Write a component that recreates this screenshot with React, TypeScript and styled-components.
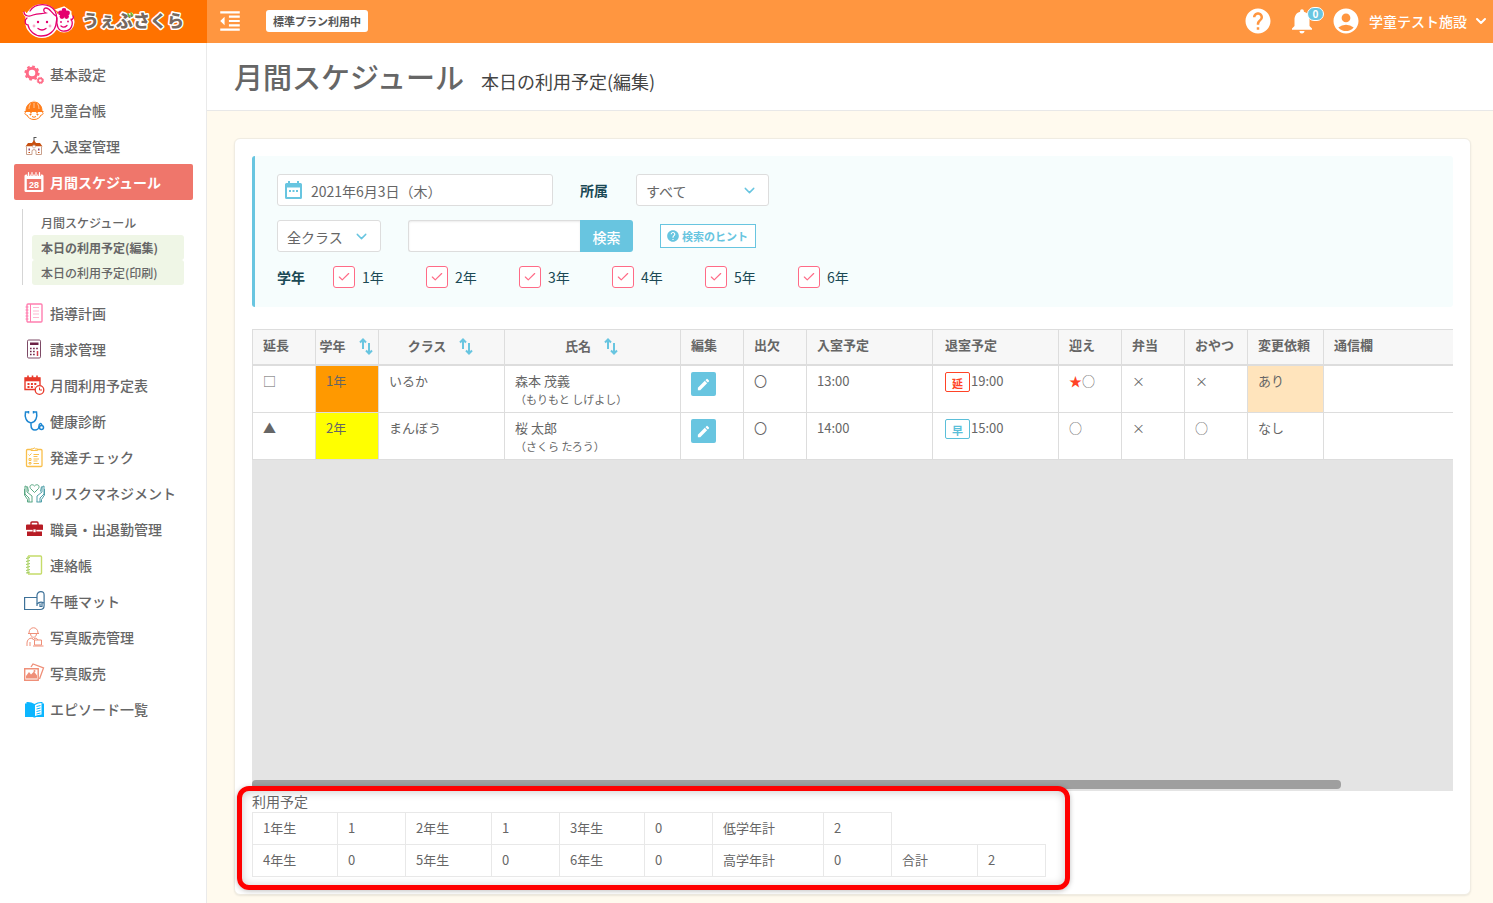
import React from "react";
import styled, { createGlobalStyle, css } from "styled-components";
import { Check, ChevronDown } from "lucide-react";
import {
  MdAccountCircle,
  MdEdit,
  MdFormatIndentDecrease,
  MdHelp,
  MdNotifications,
} from "react-icons/md";

const color = {
  text: "#666",
  teal: "#68c5e0",
  orange: "#ff9640",
  pink: "#ff6b87",
  line: "#ddd",
};

const GlobalStyle = createGlobalStyle`
  *, *::before, *::after { box-sizing: border-box; }
  body {
    margin: 0;
    background: #fffaee;
    color: ${color.text};
    font-family: "Noto Sans CJK JP", "Liberation Sans", sans-serif;
    font-size: 14px;
    line-height: 20px;
  }
  button, input, select { font: inherit; color: inherit; margin: 0; }
  button { cursor: pointer; }
  a { color: inherit; text-decoration: none; }
  ul { list-style: none; margin: 0; padding: 0; }
`;

/* ---------- frame ---------- */

const Page = styled.div`
  display: flex;
  flex-direction: column;
  min-height: 100vh;
`;

const TopBar = styled.header`
  display: flex;
  height: 43px;
  background: ${color.orange};
  color: #fff;
`;

const Brand = styled.a`
  width: 207px;
  padding-left: 20px;
  background: #ff7200;
  svg { display: block; }
`;

const TopTools = styled.div`
  flex: 1;
  display: flex;
  align-items: center;
  padding: 0 4px 2px 10px;
`;

const IconButton = styled.button`
  position: relative;
  display: flex;
  padding: 0;
  border: 0;
  background: none;
  color: #fff;
`;

const Plan = styled.span`
  margin-left: 23px;
  padding: 0 7px;
  border-radius: 3px;
  background: #fff;
  color: #555;
  font-size: 11px;
  font-weight: 700;
  line-height: 22px;
`;

const Account = styled.div`
  display: flex;
  align-items: center;
  gap: 14px;
  margin-left: auto;
`;

const Count = styled.span`
  position: absolute;
  top: 1px;
  left: 20px;
  width: 17px;
  border: 1px solid #fff;
  border-radius: 8px;
  background: ${color.teal};
  font-size: 10px;
  font-weight: 700;
  line-height: 12px;
  text-align: center;
`;

const UserButton = styled(IconButton)`
  align-items: center;
  font-weight: 500;
  span { margin: 0 6px 0 8px; }
`;

const Body = styled.div`
  flex: 1;
  display: flex;
`;

const Sidebar = styled.nav`
  flex: none;
  width: 207px;
  padding: 13px 13px 14px 14px;
  border-right: 1px solid #eaeaea;
  background: #fff;
`;

const MenuLink = styled.a<{ $active?: boolean }>`
  display: flex;
  align-items: center;
  gap: 6px;
  height: 36px;
  padding-left: 10px;
  border-radius: 2px;
  font-weight: 500;
  white-space: nowrap;
  ${(p) => p.$active && css`
    background: #ef766b;
    color: #fff;
    font-weight: 700;
  `}
`;

const SubMenu = styled.ul`
  margin: 9px 9px 10px 8px;
  padding: 1px 0 0 9px;
  border-left: 1px solid #d5d5d5;
`;

const SubLink = styled.a<{ $tinted?: boolean; $current?: boolean }>`
  display: block;
  padding-left: 9px;
  border-radius: 3px;
  background: ${(p) => (p.$tinted ? "#eff6e6" : "none")};
  font-size: 12px;
  font-weight: ${(p) => (p.$current ? 700 : 500)};
  line-height: 25px;
  white-space: nowrap;
`;

const Main = styled.main`
  flex: 1;
  min-width: 0;
`;

const PageHead = styled.div`
  display: flex;
  align-items: baseline;
  gap: 17px;
  padding: 11px 27px 7px;
  border-bottom: 1px solid #e8e8e8;
  background: #fff;
  line-height: 44px;
`;

const Title = styled.h1`
  margin: 0;
  font-size: 29px;
  font-weight: 500;
`;

const SubTitle = styled.span`
  color: #444;
  font-size: 18px;
`;

const Content = styled.div`
  padding: 27px 22px 9px 27px;
`;

const Card = styled.section`
  padding: 17px;
  border: 1px solid #f0ece2;
  border-radius: 6px;
  background: #fff;
  box-shadow: 0 1px 2px rgba(0, 0, 0, 0.08);
`;

/* ---------- filter ---------- */

const Filter = styled.form`
  display: flex;
  flex-direction: column;
  gap: 14px;
  padding: 18px 22px 19px;
  border-left: 3px solid ${color.teal};
  border-radius: 3px;
  background: #f6fdfd;
`;

const FilterRow = styled.div`
  display: flex;
  align-items: center;
  gap: 27px;
`;

const FilterLabel = styled.span`
  padding-right: 1px;
  color: #1b4955;
  font-weight: 700;
`;

const Field = styled.span`
  position: relative;
  display: inline-flex;
`;

const control = css`
  height: 32px;
  border: 1px solid ${color.line};
  border-radius: 3px;
  background: #fff;
`;

const DateInput = styled.input`
  ${control}
  width: 276px;
  padding: 2px 10px 0 33px;
`;

const DateIcon = styled.svg`
  position: absolute;
  left: 8px;
  top: 7px;
`;

const Select = styled.select<{ $wide?: boolean }>`
  ${control}
  appearance: none;
  width: ${(p) => (p.$wide ? 133 : 104)}px;
  padding: 2px 9px 0;
`;

const SelectArrow = styled(ChevronDown)`
  position: absolute;
  right: 11px;
  top: 8px;
  color: ${color.teal};
  pointer-events: none;
`;

const SearchInput = styled.input`
  ${control}
  width: 172px;
  border-right: 0;
  border-radius: 3px 0 0 3px;
  box-shadow: inset 0 1px 2px rgba(0, 0, 0, 0.08);
`;

const SearchButton = styled.button`
  width: 53px;
  height: 32px;
  padding: 2px 0 0;
  border: 0;
  border-radius: 0 3px 3px 0;
  background: ${color.teal};
  color: #fff;
  font-weight: 500;
`;

const HintButton = styled.button`
  display: flex;
  align-items: center;
  gap: 2px;
  width: 96px;
  height: 24px;
  padding: 0 0 0 5px;
  border: 1px solid ${color.teal};
  background: #fff;
  color: ${color.teal};
  font-size: 11px;
  font-weight: 700;
  white-space: nowrap;
`;

const Grades = styled.div`
  display: flex;
  color: #1b4955;
`;

const GradeLabel = styled.label`
  display: flex;
  align-items: center;
  gap: 7px;
  width: 93px;
`;

const CheckInput = styled.input`
  appearance: none;
  width: 22px;
  height: 22px;
  border: 1px solid ${color.pink};
  border-radius: 3px;
  background: #fff;
  & + svg { display: none; }
  &:checked + svg { display: block; }
`;

const CheckMark = styled(Check)`
  position: absolute;
  left: 4px;
  top: 4px;
  color: ${color.pink};
  pointer-events: none;
`;

/* ---------- schedule grid ---------- */

const GridArea = styled.div`
  display: flex;
  flex-direction: column;
  justify-content: space-between;
  min-height: 462px;
  margin-top: 22px;
  padding-bottom: 2px;
  background: #e4e4e4;
`;

const GridScroll = styled.div`
  overflow-x: auto;
  scrollbar-width: none;
`;

const ScrollThumb = styled.div`
  width: 90.7%;
  height: 9px;
  border-radius: 4px;
  background: #9f9f9f;
`;

const ScheduleTable = styled.table`
  table-layout: fixed;
  width: 1324px;
  border-collapse: separate;
  border-spacing: 0;
  background: #fff;
  font-size: 13px;
  line-height: 18px;
`;

const HeadCell = styled.th<{ $sort?: boolean; $inset?: boolean }>`
  height: 37px;
  padding: ${(p) => (p.$sort ? "0 2px 2px 0" : p.$inset ? "0 0 5px 12px" : "0 0 5px 10px")};
  border: solid ${color.line};
  border-width: 1px 0 2px 1px;
  background: #f7f7f7;
  font-weight: 700;
  text-align: left;
  white-space: nowrap;
`;

const SortButton = styled.button`
  display: flex;
  align-items: center;
  justify-content: center;
  gap: 13px;
  width: 100%;
  padding: 0;
  border: 0;
  background: none;
`;

const Cell = styled.td<{ $fill?: string; $inset?: boolean }>`
  height: 47px;
  padding: 6px 0 0 ${(p) => (p.$inset ? 12 : 10)}px;
  border: solid ${color.line};
  border-width: 0 0 1px 1px;
  background: ${(p) => p.$fill ?? "#fff"};
  vertical-align: top;
  white-space: nowrap;
`;

const Kana = styled.div`
  font-size: 11px;
`;

const EditButton = styled.button`
  display: flex;
  align-items: center;
  justify-content: center;
  width: 25px;
  height: 24px;
  padding: 0;
  border: 0;
  border-radius: 2px;
  background: ${color.teal};
  color: #fff;
`;

const TimeLine = styled.div`
  display: flex;
  gap: 1px;
`;

const TimeTag = styled.span<{ $late: boolean }>`
  width: 25px;
  height: 20px;
  border: 1px solid;
  border-radius: 2px;
  color: ${(p) => (p.$late ? "#ff4326" : "#5bbfd9")};
  font-size: 11px;
  font-weight: 700;
  line-height: 20px;
  text-align: center;
`;

const Star = styled.span`
  color: #ff4326;
`;

/* ---------- totals ---------- */

const Summary = styled.div`
  position: relative;
  width: fit-content;
`;

const SummaryTable = styled.table`
  border-collapse: collapse;
  font-size: 13px;
  caption {
    font-size: 14px;
    line-height: 21px;
    text-align: left;
  }
`;

const SummaryCell = styled.td<{ $width: number }>`
  width: ${(p) => p.$width}px;
  height: 32px;
  padding: 0 0 2px 10px;
  border: 1px solid #e8e8e8;
`;

const Highlight = styled.div`
  position: absolute;
  inset: -5px -24px -13px -15px;
  border: 5px solid #f00;
  border-radius: 12px;
  box-shadow: 0 1px 5px rgba(0, 0, 0, 0.25), inset 0 1px 10px rgba(0, 0, 0, 0.2);
  pointer-events: none;
`;

/* ---------- drawings ---------- */

const Logo = () => (
  <svg width="170" height="43" viewBox="20 0 170 43" role="img" aria-label="うぇぶさくら">
    <g fill="#fff" stroke="#fff" strokeWidth="3">
      <circle cx="42" cy="21" r="15.5" />
      <circle cx="64" cy="22" r="9" />
      <path d="M24 12q2 6 8 3M58 10l6-2 6 4v7z" />
    </g>
    <g fill="none" stroke="#e5006e" strokeWidth="1.3" strokeLinecap="round">
      <path d="M24 12c0 4 5 5 9 3 5-2 10-1 13-2-3-1-3-5 0-5 4 0 5 5 10 8" />
      <path d="M30 11C35 3 49 2 55 11c2 4 2 9 1 13-1 7-7 12-15 12-6 0-12-5-13-11-3 0-4-5-1-7" />
      <path d="M38 28.500q4 3 8 0M61 26q3 2.500 6-.5" />
      <path d="M57 18c-1 7 1 14 8 13 6 0 9-7 6-12M71 20c2-1 3-2 2-4" />
    </g>
    <g fill="#e5006e">
      <circle cx="38" cy="22" r="1.2" />
      <circle cx="47" cy="22" r="1.2" />
      <circle cx="61" cy="22" r=".9" />
      <circle cx="68" cy="21.500" r=".9" />
      <circle cx="64" cy="10.500" r="2.400" />
      <circle cx="60.500" cy="13" r="2.400" />
      <circle cx="67.500" cy="13" r="2.400" />
      <circle cx="62" cy="16.500" r="2.400" />
      <circle cx="66.500" cy="16.500" r="2.400" />
      <circle cx="64" cy="14" r="2.400" />
    </g>
    <g fill="#f9a8c8">
      <circle cx="34" cy="26" r="1.400" />
      <circle cx="50" cy="26" r="1.400" />
    </g>
    <text
      x="82"
      y="27"
      fontSize="17"
      fontWeight="900"
      fill="#766960"
      stroke="#fff"
      strokeWidth="3"
      strokeLinejoin="round"
      paintOrder="stroke"
    >
      うぇぶさくら
    </text>
    <path d="M128 14l1.500 2.500M131 13l1.500 2.500" stroke="#6fba2c" strokeWidth="1.600" strokeLinecap="round" />
  </svg>
);

const SortArrows = () => (
  <svg width="14" height="17" viewBox="0 0 14 17" fill="none" stroke={color.teal} strokeWidth="2" aria-hidden="true">
    <path d="M4 11V2M1 4.500L4 1.500l3 3M10 5v10M7 12.500l3 3 3-3" />
  </svg>
);

const CalendarGlyph = () => (
  <DateIcon width="17" height="18" viewBox="0 0 17 18" aria-hidden="true">
    <path
      fill={color.teal}
      fillRule="evenodd"
      d="M3 0h2v2h7V0h2v2h1.500q1.500 0 1.500 1.500v13q0 1.500-1.500 1.500h-14Q0 18 0 16.500v-13Q0 2 1.500 2H3zM2 6.500V16h13V6.500z"
    />
    <path fill={color.teal} d="M4 9h2v2H4zM7.500 9h2v2h-2zM11 9h2v2h-2z" />
  </DateIcon>
);

const drawings: Record<string, React.ReactNode> = {
  gears: (
    <g fill="none" stroke="#ff6b87">
      <circle cx="8" cy="9" r="4.800" strokeWidth="3" />
      <circle cx="8" cy="9" r="6.700" strokeWidth="1.800" strokeDasharray="2.700 2.560" />
      <circle cx="16.300" cy="16.500" r="2.200" strokeWidth="1.700" />
      <circle cx="16.300" cy="16.500" r="3.200" strokeWidth="1" strokeDasharray="1.300 1.210" />
    </g>
  ),
  child: (
    <g fill="none" stroke="#ff7d1a">
      <path d="M2 11C2 5 6 2 10 2s8 3 8 9H2z" fill="#ff7d1a" />
      <path d="M10 2V0M6.500 3.500Q5 6 5 9M13.500 3.500Q15 6 15 9M10 3v5" stroke="#ffd9b8" strokeWidth=".8" />
      <path d="M.5 11.500h19M2 12c-2 1-1 3 1 3 1 3 4 4.500 7 4.500s6-1.500 7-4.500c2 0 3-2 1-3M6 12l2 1M14 12l-2 1M8 16.500q2 1.500 4 0" />
      <circle cx="6.500" cy="14.500" r=".6" fill="#ff7d1a" />
      <circle cx="13.500" cy="14.500" r=".6" fill="#ff7d1a" />
    </g>
  ),
  school: (
    <g>
      <path d="M10 1v4M10 1.500h2.500" stroke="#555" fill="none" />
      <path d="M1.500 10.500L4 7h4l2-3 2 3h4l2.500 3.500z" fill="#c8500f" />
      <path d="M2.500 10.500v8H8v-4q2-2 4 0v4h5.500v-8" fill="#fff" stroke="#c9a08c" />
      <path d="M4.500 12.500h1.500v2H4.500zM14 12.500h1.500v2H14z" fill="#8a4a78" />
      <circle cx="10" cy="10.500" r="1.500" fill="#fff" stroke="#c9a08c" strokeWidth=".7" />
      <path d="M4.500 16.500h1.500M14 16.500h1.500" stroke="#c8500f" />
    </g>
  ),
  calendar28: (
    <g>
      <path d="M2 2.500h16q1.500 0 1.500 1.500v14.500q0 1.500-1.500 1.500H2Q.5 20 .5 18.500V4Q.5 2.500 2 2.500z" fill="#fff" />
      <path d="M2.800 7h14.400v11H2.800z" fill="#ef766b" />
      <path d="M4.500 0v4M8 0v4M12 0v4M15.500 0v4" stroke="#ef766b" strokeWidth="2.400" />
      <path d="M4.500.5v3M8 .5v3M12 .5v3M15.500.5v3" stroke="#fff" strokeWidth="1.200" strokeLinecap="round" />
      <text x="10" y="15.800" fontSize="9" fontWeight="700" fontFamily="Liberation Sans, sans-serif" textAnchor="middle" fill="#fff">
        28
      </text>
    </g>
  ),
  notebook: (
    <g fill="none" stroke="#ff7fb0">
      <rect x="3" y="1" width="15" height="18" rx="1" strokeWidth="1.400" />
      <path d="M6.500 1v18M1.500 4h3M1.500 7h3M1.500 10h3M1.500 13h3M1.500 16h3" />
      <path d="M9 4.500h6M9 8h6M9 11h6M9 14.500h6" stroke="#ffb7d2" />
    </g>
  ),
  calculator: (
    <g>
      <rect x="3.500" y="1" width="13" height="18" rx="1.200" fill="#fff" stroke="#7d4a66" />
      <path d="M6 3.500h8.500V6H6z" fill="#6d2346" />
      <path d="M6 9.500h8.500M6 12.500h6M6 15.500h6" stroke="#6d2346" strokeWidth="1.600" strokeDasharray="1.600 1.500" />
      <path d="M13.500 12v5" stroke="#d03b4a" strokeWidth="1.500" />
    </g>
  ),
  calendarClock: (
    <g fill="none" stroke="#e83a2b">
      <path d="M12 14.500H1V3h15v7" strokeWidth="1.400" />
      <path d="M1 4.500h15" strokeWidth="3.600" />
      <path d="M4 .5v3M8.500.5v3M13 .5v3" strokeWidth="1.600" />
      <path d="M3.500 9h9M3.500 12h7" strokeWidth="1.800" strokeDasharray="2 1.400" />
      <circle cx="15.500" cy="15" r="4.300" fill="#fff" strokeWidth="1.300" />
      <path d="M15.500 12.500V15h2.500" />
    </g>
  ),
  stethoscope: (
    <g fill="none" stroke="#1c86d1" strokeWidth="1.500">
      <path d="M4 1H1.500C.5 6 2 11 7 12c5-1 6.500-6 5.500-11H10M7 12v2c0 7 8 6 8 1 0-3 2-3 3-1" />
      <circle cx="17.500" cy="16.500" r="2" />
      <path d="M4.500 0v2.500M9.500 0v2.500" />
    </g>
  ),
  checklist: (
    <g fill="none" stroke="#f9bf4b">
      <rect x="2.500" y="2.500" width="15.500" height="17" rx="1" strokeWidth="1.300" />
      <path d="M7 3.500V2h2q1-2.500 2.500 0h2v1.500z" fill="#fff" />
      <path d="M9.500 7.500H15M9.500 9.500h4M9.500 12H15M9.500 14h4M9.500 16.500H15M4.500 7.500l1 1 2-2" />
      <path d="M5 11.500h2v2H5zM5 15.500h2v1.500H5z" />
    </g>
  ),
  hands: (
    <g fill="none" stroke="#5aa884" strokeWidth="1">
      <path d="M10.500 9.500L6.500 5.500C4.500 2 8.500.5 10.500 3c2-2.500 6-1 4 2.500z" />
      <path d="M1 3v8l4 4v4M1 3q2 0 2 2v4l5 4v6M3.500 3.500l1 5M.5 6v6l3 4.500V19h5" />
      <path d="M20 3v8l-4 4v4M20 3q-2 0-2 2v4l-5 4v6M17.500 3.500l-1 5M20.500 6v6l-3 4.500V19h-5" stroke="#4f9fa8" />
    </g>
  ),
  briefcase: (
    <g fill="#b71c25">
      <path d="M7 6V4q0-1 1-1h5q1 0 1 1v2" fill="none" stroke="#b71c25" strokeWidth="1.400" />
      <path d="M3 5.500h15q1 0 1 1V11H2V6.500q0-1 1-1zM3 12.500h15V17H3z" />
      <path d="M2 11.300h17" stroke="#fff" strokeWidth=".8" />
      <path d="M9 10h3v3.500H9z" fill="#fff" stroke="#b71c25" strokeWidth=".7" />
    </g>
  ),
  diary: (
    <g fill="none" stroke="#c5dc6a">
      <path d="M4 1h12.500q1 0 1 1v16q0 1-1 1H4" strokeWidth="1.400" />
      <path d="M4 1v18" strokeWidth="1.200" />
      <path d="M2 3.500l4-1M2 6.500l4-1M2 9.500l4-1M2 12.500l4-1M2 15.500l4-1M2 18l4-1" stroke="#9ccc65" />
    </g>
  ),
  mat: (
    <g fill="none" stroke="#3d7198" strokeWidth="1.200">
      <path d="M13 6.500H.6v12h15.500q4 0 4-4V4q0-3.400-3.200-3.400T13 4v11" />
      <path d="M20 12q-4-2-7 1M16 12.500v3h2V11" />
    </g>
  ),
  seller: (
    <g fill="none" stroke="#ef8f78">
      <path d="M5 6c0-7 9-7 9 0M4 6.500h11M6.500 6.500c0 5 6 5 6 0" />
      <path d="M3 19v-3c0-3 2-5 5-5l1.500 2 1.500-2q2 0 3 2M6 19v-4" />
      <path d="M10.500 13h7v5h-7zM9 19h10.500" fill="#fff" />
    </g>
  ),
  photos: (
    <g>
      <path d="M7 4l2-3 10.500 4-4 11" fill="none" stroke="#ef8f78" strokeWidth="1.300" />
      <path d="M.7 5.700h13.500v11.500H.7z" fill="#fff" stroke="#ef8f78" strokeWidth="1.400" />
      <path d="M2 15.500V13l3-4 2 2.500 3-3 3 4v3z" fill="#ef8f78" />
      <circle cx="10.500" cy="8" r="1" fill="#ef8f78" />
    </g>
  ),
  book: (
    <g>
      <path d="M1 4.500h1.500V3Q7 2.500 10.500 5 14 2.500 18.500 3v1.500H20V18H12q-1.500 1-3 0H1z" fill="#0cb6ff" />
      <path d="M11 6q3-2 6.500-2v11.500q-3.500 0-6.500 1.500z" fill="#fff" />
      <path d="M12.500 7.500l4-1M12.500 10l4-1M12.500 12.500l4-1M12.500 15l4-1" stroke="#0cb6ff" strokeWidth="1" />
    </g>
  ),
};

const MenuIcon = ({ name }: { name: string }) => (
  <svg width="20" height="20" viewBox="0 0 20 20" overflow="visible" aria-hidden="true">
    {drawings[name]}
  </svg>
);

/* ---------- data ---------- */

const menu = [
  { icon: "gears", label: "基本設定" },
  { icon: "child", label: "児童台帳" },
  { icon: "school", label: "入退室管理" },
  {
    icon: "calendar28",
    label: "月間スケジュール",
    children: [
      { label: "月間スケジュール" },
      { label: "本日の利用予定(編集)", tinted: true, current: true },
      { label: "本日の利用予定(印刷)", tinted: true },
    ],
  },
  { icon: "notebook", label: "指導計画" },
  { icon: "calculator", label: "請求管理" },
  { icon: "calendarClock", label: "月間利用予定表" },
  { icon: "stethoscope", label: "健康診断" },
  { icon: "checklist", label: "発達チェック" },
  { icon: "hands", label: "リスクマネジメント" },
  { icon: "briefcase", label: "職員・出退勤管理" },
  { icon: "diary", label: "連絡帳" },
  { icon: "mat", label: "午睡マット" },
  { icon: "seller", label: "写真販売管理" },
  { icon: "photos", label: "写真販売" },
  { icon: "book", label: "エピソード一覧" },
] as {
  icon: string;
  label: string;
  children?: { label: string; tinted?: boolean; current?: boolean }[];
}[];

const columns = [
  { label: "延長", width: 63 },
  { label: "学年", width: 63, sort: true },
  { label: "クラス", width: 126, sort: true },
  { label: "氏名", width: 176, sort: true },
  { label: "編集", width: 63 },
  { label: "出欠", width: 63 },
  { label: "入室予定", width: 126 },
  { label: "退室予定", width: 126, inset: true },
  { label: "迎え", width: 63 },
  { label: "弁当", width: 63 },
  { label: "おやつ", width: 63 },
  { label: "変更依頼", width: 76 },
  { label: "通信欄", width: 253 },
];

const children = [
  {
    mark: "□", grade: "1年", gradeFill: "#ff9900", room: "いるか", name: "森本 茂義", kana: "（もりもと しげよし）",
    enter: "13:00", tag: "延", late: true, leave: "19:00", star: true, lunch: "×", snack: "×", change: "あり", changeFill: "#ffe4bc",
  },
  {
    mark: "▲", grade: "2年", gradeFill: "#ffff00", room: "まんぼう", name: "桜 太郎", kana: "（さくら たろう）",
    enter: "14:00", tag: "早", late: false, leave: "15:00", star: false, lunch: "×", snack: "○", change: "なし", changeFill: undefined,
  },
];

const totalWidths = [85, 68, 86, 68, 85, 68, 111, 68, 86, 68];
const totals = [
  ["1年生", "1", "2年生", "1", "3年生", "0", "低学年計", "2"],
  ["4年生", "0", "5年生", "0", "6年生", "0", "高学年計", "0", "合計", "2"],
];

export default function App() {
  return (
    <Page>
      <GlobalStyle />
      <TopBar>
        <Brand href="#">
          <Logo />
        </Brand>
        <TopTools>
          <IconButton type="button" aria-label="メニューを閉じる">
            <MdFormatIndentDecrease size={26} />
          </IconButton>
          <Plan>標準プラン利用中</Plan>
          <Account>
            <IconButton type="button" aria-label="ヘルプ">
              <MdHelp size={30} />
            </IconButton>
            <IconButton type="button" aria-label="お知らせ">
              <MdNotifications size={30} />
              <Count>0</Count>
            </IconButton>
            <UserButton type="button">
              <MdAccountCircle size={30} />
              <span>学童テスト施設</span>
              <ChevronDown size={16} strokeWidth={3} />
            </UserButton>
          </Account>
        </TopTools>
      </TopBar>

      <Body>
        <Sidebar>
          <ul>
            {menu.map((item) => (
              <li key={item.label}>
                <MenuLink href="#" $active={!!item.children}>
                  <MenuIcon name={item.icon} />
                  {item.label}
                </MenuLink>
                {item.children && (
                  <SubMenu>
                    {item.children.map((sub) => (
                      <li key={sub.label}>
                        <SubLink href="#" $tinted={sub.tinted} $current={sub.current}>
                          {sub.label}
                        </SubLink>
                      </li>
                    ))}
                  </SubMenu>
                )}
              </li>
            ))}
          </ul>
        </Sidebar>

        <Main>
          <PageHead>
            <Title>月間スケジュール</Title>
            <SubTitle>本日の利用予定(編集)</SubTitle>
          </PageHead>
          <Content>
            <Card>
              <Filter onSubmit={(e) => e.preventDefault()}>
                <FilterRow>
                  <Field>
                    <DateInput type="text" aria-label="日付" defaultValue="2021年6月3日（木）" />
                    <CalendarGlyph />
                  </Field>
                  <FilterLabel as="label" htmlFor="group">所属</FilterLabel>
                  <Field>
                    <Select id="group" $wide>
                      <option>すべて</option>
                    </Select>
                    <SelectArrow size={17} />
                  </Field>
                </FilterRow>
                <FilterRow>
                  <Field>
                    <Select aria-label="クラス">
                      <option>全クラス</option>
                    </Select>
                    <SelectArrow size={17} />
                  </Field>
                  <Field>
                    <SearchInput type="text" aria-label="検索キーワード" />
                    <SearchButton type="submit">検索</SearchButton>
                  </Field>
                  <HintButton type="button">
                    <MdHelp size={14} />
                    検索のヒント
                  </HintButton>
                </FilterRow>
                <FilterRow>
                  <FilterLabel>学年</FilterLabel>
                  <Grades>
                    {[1, 2, 3, 4, 5, 6].map((n) => (
                      <GradeLabel key={n}>
                        <Field>
                          <CheckInput type="checkbox" defaultChecked />
                          <CheckMark size={14} strokeWidth={2} />
                        </Field>
                        {n}年
                      </GradeLabel>
                    ))}
                  </Grades>
                </FilterRow>
              </Filter>

              <GridArea>
                <GridScroll>
                  <ScheduleTable>
                    <colgroup>
                      {columns.map((c) => (
                        <col key={c.label} width={c.width} />
                      ))}
                    </colgroup>
                    <thead>
                      <tr>
                        {columns.map((c) => (
                          <HeadCell key={c.label} $sort={c.sort} $inset={c.inset}>
                            {c.sort ? (
                              <SortButton type="button">
                                {c.label}
                                <SortArrows />
                              </SortButton>
                            ) : (
                              c.label
                            )}
                          </HeadCell>
                        ))}
                      </tr>
                    </thead>
                    <tbody>
                      {children.map((c) => (
                        <tr key={c.name}>
                          <Cell>{c.mark}</Cell>
                          <Cell $fill={c.gradeFill}>{c.grade}</Cell>
                          <Cell>{c.room}</Cell>
                          <Cell>
                            {c.name}
                            <Kana>{c.kana}</Kana>
                          </Cell>
                          <Cell>
                            <EditButton type="button" aria-label={`${c.name}を編集`}>
                              <MdEdit size={15} />
                            </EditButton>
                          </Cell>
                          <Cell>〇</Cell>
                          <Cell>{c.enter}</Cell>
                          <Cell $inset>
                            <TimeLine>
                              <TimeTag $late={c.late}>{c.tag}</TimeTag>
                              {c.leave}
                            </TimeLine>
                          </Cell>
                          <Cell>
                            {c.star && <Star>★</Star>}○
                          </Cell>
                          <Cell>{c.lunch}</Cell>
                          <Cell>{c.snack}</Cell>
                          <Cell $fill={c.changeFill}>{c.change}</Cell>
                          <Cell />
                        </tr>
                      ))}
                    </tbody>
                  </ScheduleTable>
                </GridScroll>
                <ScrollThumb />
              </GridArea>

              <Summary>
                <SummaryTable>
                  <caption>利用予定</caption>
                  <tbody>
                    {totals.map((row) => (
                      <tr key={row[0]}>
                        {row.map((value, i) => (
                          <SummaryCell key={i} $width={totalWidths[i]}>
                            {value}
                          </SummaryCell>
                        ))}
                      </tr>
                    ))}
                  </tbody>
                </SummaryTable>
                <Highlight />
              </Summary>
            </Card>
          </Content>
        </Main>
      </Body>
    </Page>
  );
}
